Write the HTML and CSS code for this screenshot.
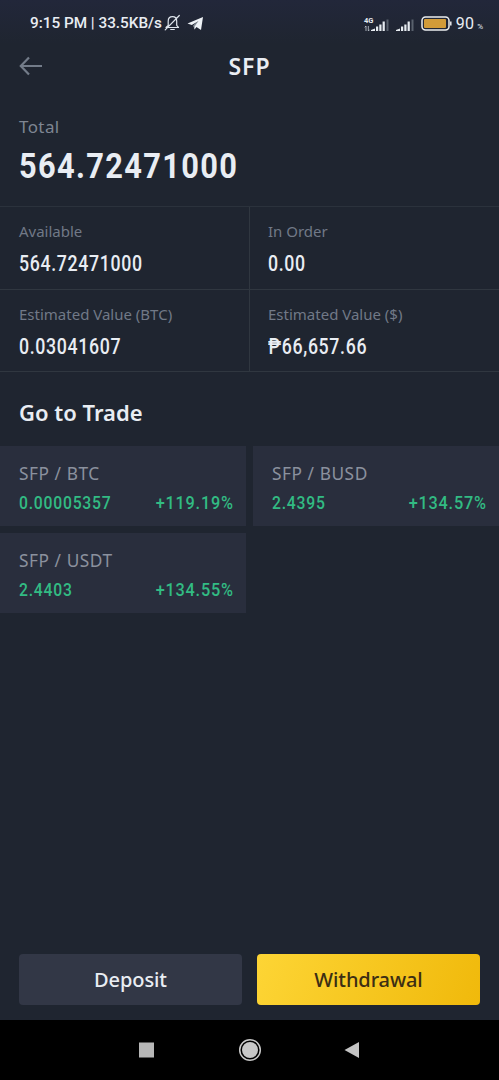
FILE: index.html
```html
<!DOCTYPE html>
<html lang="en">
<head>
<meta charset="utf-8">
<title>SFP</title>
<link rel="stylesheet" href="styles.css">
</head>
<body>
<div class="screen">
  <div class="status">
    <span class="clock">9:15 PM | 33.5KB/s</span>
    <svg class="bell" width="17" height="18" viewBox="0 0 17 18" fill="none" stroke="#dfe5ec" stroke-width="1.2" stroke-linecap="round" stroke-linejoin="round"><path d="M2 13.500h12.500l-1.800-2.200V7.200C12.700 4.500 11 2.700 8.500 2.700S4.200 4.500 4.200 7.200v4.100zM6.700 15.500h3.600M1.200 15.800 15.300 1.500"/></svg>
    <svg class="plane" width="17" height="15" viewBox="0 0 17 15"><path d="M.5 7.500 16 1l-2 13-4.500-3L7.500 13.500 6.500 9.500 11.500 5 4.800 9z" fill="#eef2f6"/><path d="m6.500 9.500 5-4.500-3.800 5.500-.2 3z" fill="#89929d"/></svg>
    <span class="spacer"></span>
    <svg class="signal" width="52" height="19" viewBox="0 0 52 19"><g fill="#e6ebf0"><path d="M8 17h4v-2.500l-4 1.500zM13 12.500h2.200V17H13zM16.300 10.500h2.200V17h-2.200zM19.600 7.500h2.200V17h-2.200zM33 17h4v-2.500l-4 1.500zM38 12.500h2.200V17H38zM41.300 10.500h2.200V17h-2.200zM44.600 7.500h2.200V17h-2.200z"/><path d="M23.500 5.500h2V17h-2zM48.500 5.500h2V17h-2z" fill="#59616d"/></g><path d="M3 12v5m-1.300-3.700L3 12m2.300 0v5m1.300-1.300L5.300 17" stroke="#c6ced7" stroke-width=".8" fill="none"/><text x="1" y="9" class="net">4G</text></svg>
    <svg class="battery" width="32" height="15" viewBox="0 0 32 15"><rect x="1" y="1" width="27" height="13" rx="3.500" fill="none" stroke="#eceef0" stroke-width="1.500"/><rect x="3" y="3" width="22" height="9" rx="1" fill="#d29b38"/><path d="M29.800 5.500v4" stroke="#eceef0" stroke-width="1.500"/></svg>
    <span class="charge">90</span><span class="pct">%</span>
  </div>
  <header class="header">
    <svg class="back" width="24" height="20" viewBox="0 0 24 20" fill="none" stroke="#737c89" stroke-width="2.2"><path d="M23 10H2M10 1.500 1.800 10l8.200 8.500"/></svg>
    <h1 class="title">SFP</h1>
  </header>
  <section class="total">
    <div class="total-label">Total</div>
    <div class="total-value">564.72471000</div>
  </section>
  <section class="stats">
    <div class="stat"><div class="label">Available</div><div class="value">564.72471000</div></div>
    <div class="stat"><div class="label">In Order</div><div class="value">0.00</div></div>
    <div class="stat"><div class="label">Estimated Value (BTC)</div><div class="value">0.03041607</div></div>
    <div class="stat"><div class="label">Estimated Value ($)</div><div class="value">₱66,657.66</div></div>
  </section>
  <h2 class="trade-title">Go to Trade</h2>
  <section class="pairs">
    <div class="pair"><div class="pair-name">SFP / BTC</div><div class="quote"><span class="price">0.00005357</span><span class="change">+119.19%</span></div></div>
    <div class="pair"><div class="pair-name">SFP / BUSD</div><div class="quote"><span class="price">2.4395</span><span class="change">+134.57%</span></div></div>
    <div class="pair"><div class="pair-name">SFP / USDT</div><div class="quote"><span class="price">2.4403</span><span class="change">+134.55%</span></div></div>
  </section>
  <footer class="actions">
    <button class="button">Deposit</button>
    <button class="button button-primary">Withdrawal</button>
  </footer>
  <nav class="navbar">
    <svg width="222" height="24" viewBox="0 0 222 24"><rect x="0" y="4.500" width="15" height="15" fill="#b7b7b7"/><circle cx="111" cy="12" r="10.300" fill="none" stroke="#c8c8c8" stroke-width="1.500"/><circle cx="111" cy="12" r="8" fill="#c8c8c8"/><path d="M205.500 12 220 4v16z" fill="#c4c4c4"/></svg>
  </nav>
</div>
</body>
</html>
```
FILE: styles.css
```css
* { box-sizing: border-box; }
body { margin: 0; background: #1f2530; }
.screen { width: 499px; height: 1080px; display: flex; flex-direction: column; background: #1f2530; color: #e9edf3; font-family: "Noto Sans", sans-serif; overflow: hidden; }
.status { height: 44px; padding: 2px 16px 0 30px; display: flex; align-items: center; background: linear-gradient(#22273a, #1f2530); font-family: Roboto, sans-serif; flex: none; }
.clock { font-size: 15.3px; font-weight: 500; white-space: pre; }
.bell { margin-left: 2px; }
.plane { margin-left: 6px; }
.spacer { flex: 1; }
.signal { margin-right: 6px; }
.net { font: 700 7.500px Roboto, sans-serif; fill: #e6ebf0; }
.battery { margin-right: 3px; }
.charge { font-size: 16px; letter-spacing: .2px; }
.pct { font-size: 8px; margin: 6px 0 0 3px; }
.header { height: 44px; padding: 0 19px; display: grid; grid-template-columns: 24px 1fr 24px; align-items: center; flex: none; }
.title { margin: 0; font-size: 23px; line-height: 44px; font-weight: 600; text-align: center; letter-spacing: 1px; }
.total { height: 119px; padding: 27px 19px 0; border-bottom: 1px solid #2b323c; flex: none; }
.total-label { font-size: 17px; line-height: 24px; color: #7e8592; letter-spacing: .4px; }
.total-value { font: 700 35px/56px Roboto, sans-serif; letter-spacing: 1.5px; transform: scaleX(.88); transform-origin: left; }
.stats { display: grid; grid-template-columns: 250px 249px; grid-template-rows: 83px 82px; flex: none; }
.stat { padding: 14px 18px 0 18px; border-bottom: 1px solid #303740; }
.stat:nth-child(odd) { padding-left: 19px; border-right: 1px solid #303740; }
.label { font-size: 15px; line-height: 20px; color: #717987; white-space: nowrap; }
.value { font: 500 21.500px/46px Roboto, sans-serif; letter-spacing: .8px; transform: scaleX(.825); transform-origin: left; }
.trade-title { margin: 0; padding: 0 19px; height: 74px; font-size: 22px; line-height: 80px; font-weight: 600; flex: none; }
.pairs { display: grid; grid-template-columns: 246px 246px; gap: 7px; grid-auto-rows: 80px; flex: none; }
.pair { padding: 14px 13px 0 19px; background: #292e3d; }
.pair-name { font-size: 17.300px; line-height: 28px; color: #8b919e; letter-spacing: .55px; }
.quote { display: flex; justify-content: space-between; color: #32bb83; font: 500 18.500px/30px Roboto, sans-serif; letter-spacing: .9px; }
.price { transform: scaleX(.85); transform-origin: left; }
.change { transform: scaleX(.88); transform-origin: right; margin-right: -1px; }
.actions { margin-top: auto; height: 66px; padding: 0 19px; display: grid; grid-template-columns: 223px 223px; justify-content: space-between; align-items: start; flex: none; }
.button { height: 51px; border: 0; padding: 0; border-radius: 4px; background: #323746; color: #e9edf3; font: 500 20px/51px "Noto Sans", sans-serif; letter-spacing: -.1px; }
.button-primary { background: linear-gradient(110deg, #fdd535, #f0b90b); color: #3c2e14; }
.navbar { height: 60px; display: flex; justify-content: center; align-items: center; background: #000; flex: none; }
```
